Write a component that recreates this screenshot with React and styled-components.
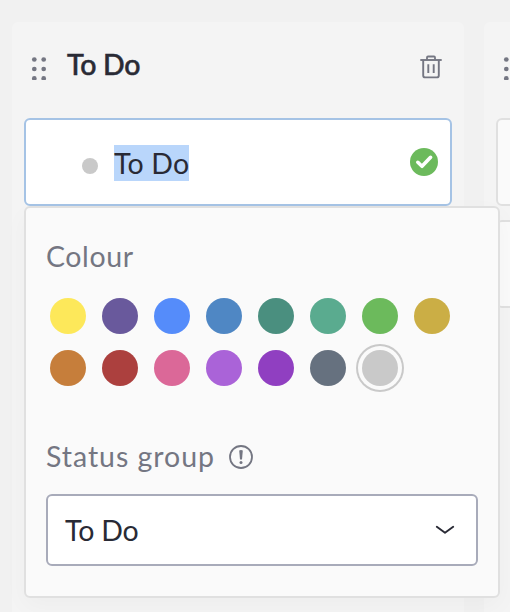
import { useState } from "react";
import styled, { createGlobalStyle } from "styled-components";

const swatches = [
  "#fde85a",
  "#69599c",
  "#558cfa",
  "#4f87c4",
  "#4a8f7f",
  "#5aab8f",
  "#6cba5c",
  "#cbae45",
  "#c67e3b",
  "#ac403e",
  "#db6898",
  "#aa63d8",
  "#903fc1",
  "#66717f",
  "#c9c9c9",
];

const DragHandle = () => (
  <HandleIcon viewBox="0 0 16 24">
    {[3.5, 13, 22.4].map((y) => (
      <g key={y}>
        <circle cx="3.3" cy={y} r="2.35" />
        <circle cx="12.7" cy={y} r="2.35" />
      </g>
    ))}
  </HandleIcon>
);

const TrashIcon = () => (
  <svg width="22" height="24" viewBox="0 0 22 24" fill="none" stroke="#747682">
    <path d="M0.3 5H21.7" strokeWidth="1.9" />
    <path d="M7 4.5V2.6Q7 1.5 8 1.5H14Q15 1.5 15 2.6V4.5" strokeWidth="1.8" />
    <path
      d="M3.2 5V20.5Q3.2 22.4 5.3 22.4H16.7Q18.8 22.4 18.8 20.5V5"
      strokeWidth="1.9"
    />
    <path d="M8.3 9.2V18M13.7 9.2V18" strokeWidth="1.9" />
  </svg>
);

const CheckIcon = () => (
  <svg width="28" height="28" viewBox="0 0 28 28" fill="none">
    <circle cx="14" cy="14" r="14" fill="#6cba5c" />
    <path
      d="M7.8 14.3L12 18.3L20.6 9.3"
      stroke="#fff"
      strokeWidth="3.6"
      strokeLinecap="round"
      strokeLinejoin="round"
    />
  </svg>
);

const InfoIcon = () => (
  <svg width="24" height="24" viewBox="0 0 24 24" fill="none">
    <circle cx="12" cy="12" r="11" stroke="#747682" strokeWidth="1.8" />
    <path d="M10.2 5.4Q12 4.6 13.8 5.4L13 14.4H11Z" fill="#747682" />
    <circle cx="12" cy="17.6" r="1.5" fill="#747682" />
  </svg>
);

const ChevronIcon = () => (
  <svg width="20" height="10" viewBox="0 0 20 10" fill="none">
    <path
      d="M1.8 1.7L10 7.8L18.2 1.7"
      stroke="#292a35"
      strokeWidth="1.9"
      strokeLinecap="round"
      strokeLinejoin="round"
    />
  </svg>
);

const App = () => {
  const [colour, setColour] = useState("#c9c9c9");

  return (
    <>
      <GlobalStyle />
      <Board>
        <Column>
          <ColumnHeader>
            <DragHandle />
            <ColumnTitle>To Do</ColumnTitle>
            <IconButton aria-label="Delete column">
              <TrashIcon />
            </IconButton>
          </ColumnHeader>
          <StatusCard $active>
            <StatusDot $colour={colour} />
            <StatusName>To Do</StatusName>
            <IconButton aria-label="Save status">
              <CheckIcon />
            </IconButton>
            {/* status settings */}
            <Popover>
              <Label $spacing="0.6px">Colour</Label>
              <SwatchGrid>
                {swatches.map((c) => (
                  <Swatch
                    key={c}
                    $colour={c}
                    $selected={c === colour}
                    aria-label={c}
                    onClick={() => setColour(c)}
                  />
                ))}
              </SwatchGrid>
              <LabelRow>
                <Label $spacing="0.97px">Status group</Label>
                <InfoIcon />
              </LabelRow>
              <Select>
                <span>To Do</span>
                <ChevronIcon />
              </Select>
            </Popover>
          </StatusCard>
        </Column>
        <Column>
          <ColumnHeader>
            <DragHandle />
          </ColumnHeader>
          <StatusCard />
          <StatusCard />
        </Column>
      </Board>
    </>
  );
};

export default App;

const GlobalStyle = createGlobalStyle`
  * {
    box-sizing: border-box;
  }
  body {
    margin: 0;
    overflow: hidden;
    background: #f1f1f1;
    font-family: Lato, "Liberation Sans", sans-serif;
    font-size: 28.5px;
    color: #292a35;
  }
`;

const Board = styled.main`
  display: flex;
  gap: 20px;
  height: 612px;
  padding: 22px 0 0 12px;
  overflow: hidden;
`;

const Column = styled.section`
  display: flex;
  flex-direction: column;
  flex: 0 0 452px;
  gap: 14px;
  padding: 0 12px;
  border-radius: 6px 6px 0 0;
  background: #f4f4f4;
`;

const ColumnHeader = styled.header`
  display: flex;
  align-items: center;
  height: 82px;
  padding: 8px 10px 0 7px;
`;

const HandleIcon = styled.svg`
  width: 16px;
  height: 24px;
  margin-top: 2px;
  fill: #747682;
`;

const ColumnTitle = styled.h2`
  flex: 1;
  margin: -6px 0 0 20px;
  font-size: 28.5px;
  font-weight: 500;
  line-height: 36px;
  letter-spacing: -0.3px;
  -webkit-text-stroke: 0.5px #292a35;
`;

const IconButton = styled.button`
  display: flex;
  padding: 0;
  border: 0;
  background: none;
  cursor: pointer;
`;

const StatusCard = styled.div`
  position: relative;
  display: flex;
  align-items: center;
  flex: 0 0 88px;
  padding: 0 12px 0 56px;
  border: 2px solid ${({ $active }) => ($active ? "#a5c3e5" : "#e0e0e0")};
  border-radius: 6px;
  background: ${({ $active }) => ($active ? "#fff" : "#fafafa")};
`;

const StatusDot = styled.span`
  width: 16px;
  height: 16px;
  margin-top: 8px;
  border-radius: 50%;
  background: ${({ $colour }) => $colour};
`;

const StatusName = styled.span`
  margin: 2px auto 0 16px;
  line-height: 36px;
  letter-spacing: 0.15px;
  background: #b9d6fb;
`;

const Popover = styled.div`
  position: absolute;
  top: 86px;
  left: -2px;
  z-index: 10;
  width: 476px;
  height: 392px;
  padding: 30px 20px;
  border: 2px solid #e0e0e0;
  border-radius: 6px;
  background: #fafafa;
  box-shadow: 0 8px 24px rgba(0, 0, 0, 0.03);
`;

const Label = styled.div`
  line-height: 36px;
  letter-spacing: ${({ $spacing }) => $spacing};
  color: #747682;
`;

const SwatchGrid = styled.div`
  display: grid;
  grid-template-columns: repeat(8, 36px);
  gap: 16px;
  padding: 24px 4px 0;
`;

const Swatch = styled.button`
  width: 36px;
  height: 36px;
  padding: 0;
  border: 0;
  border-radius: 50%;
  background: ${({ $colour }) => $colour};
  box-shadow: ${({ $selected, $colour }) =>
    $selected ? `0 0 0 4px #fafafa, 0 0 0 6px ${$colour}` : "none"};
  cursor: pointer;
`;

const LabelRow = styled.div`
  display: flex;
  align-items: center;
  gap: 14px;
  margin-top: 52px;

  svg {
    margin-top: 2px;
  }
`;

const Select = styled.div`
  display: flex;
  align-items: center;
  justify-content: space-between;
  height: 72px;
  margin-top: 20px;
  padding: 0 21px 0 17px;
  border: 2px solid #a8abba;
  border-radius: 6px;
  background: #fff;
  letter-spacing: -0.2px;
`;
